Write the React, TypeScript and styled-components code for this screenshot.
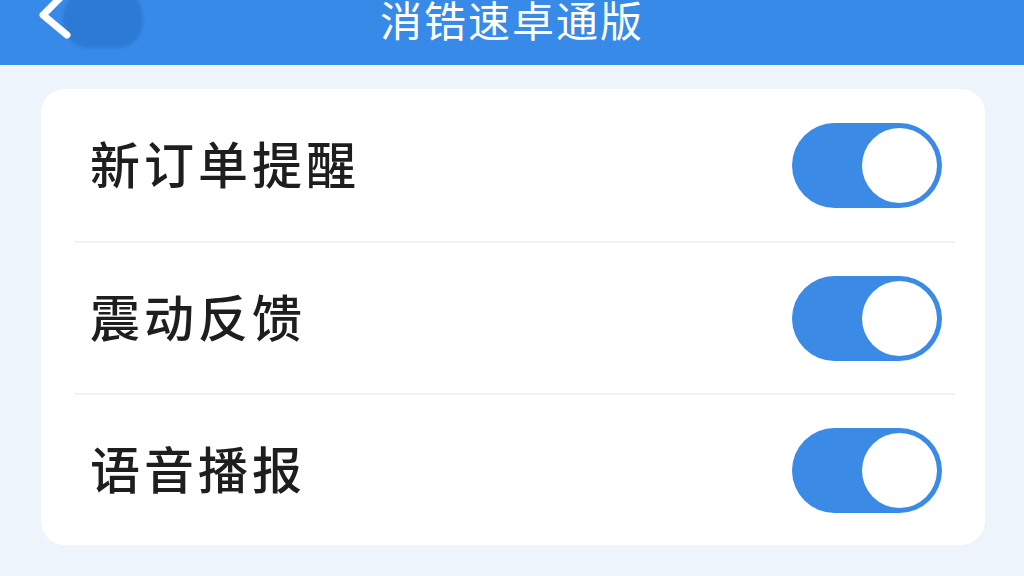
import React, { useState } from "react";
import styled, { createGlobalStyle } from "styled-components";

const GlobalStyle = createGlobalStyle`
    html, body {
        margin: 0;
        padding: 0;
        background: #eef4fc;
    }
    body {
        width: 1024px;
        height: 576px;
        overflow: hidden;
        font-family: "Noto Sans CJK SC", "Noto Sans", sans-serif;
    }
`;

type Setting = { id: string; label: string; on: boolean };

const initial: Setting[] = [
    { id: "order", label: "新订单提醒", on: true },
    { id: "vibrate", label: "震动反馈", on: true },
    { id: "voice", label: "语音播报", on: true },
];

export default function App() {
    const [items, setItems] = useState(initial);
    const toggle = (id: string) =>
        setItems((list) => list.map((it) => (it.id === id ? { ...it, on: !it.on } : it)));

    return (
        <Style_page>
            <GlobalStyle />
            <Style_header>
                <Style_back aria-label="返回">
                    <Style_blob />
                    <Style_chevron width="40" height="52" viewBox="0 0 40 52">
                        <polyline
                            points="29,4 9,24 33,44"
                            fill="none"
                            stroke="#fff"
                            strokeWidth="7"
                            strokeLinecap="round"
                            strokeLinejoin="round"
                        />
                    </Style_chevron>
                </Style_back>
                <Style_title>消锆速卓通版</Style_title>
                <Style_spacer />
            </Style_header>

            <Style_body>
                <Style_card>
                    {items.map((it) => (
                        <Style_row key={it.id}>
                            <Style_label>{it.label}</Style_label>
                            <Style_switch $on={it.on} onClick={() => toggle(it.id)}>
                                <Style_knob />
                            </Style_switch>
                        </Style_row>
                    ))}
                </Style_card>
            </Style_body>
        </Style_page>
    );
}

const Style_page = styled.div`
    width: 1024px;
    height: 576px;
    display: flex;
    flex-direction: column;
    background: #eef4fc;
`;

const Style_header = styled.header`
    height: 65px;
    flex-shrink: 0;
    background: #378ae8;
    display: flex;
    align-items: flex-start;
    padding: 0 34px;
    box-sizing: border-box;
    overflow: hidden;
`;

const Style_back = styled.div`
    position: relative;
    width: 110px;
    height: 57px;
    margin-top: -9px;
`;

const Style_blob = styled.div`
    position: absolute;
    left: 29px;
    top: 0;
    width: 80px;
    height: 57px;
    border-radius: 26px;
    background: #2c7ad4;
    filter: blur(1.5px);
`;

const Style_chevron = styled.svg`
    position: relative;
    display: block;
`;

const Style_title = styled.h1`
    flex: 1;
    margin: -4px 0 0;
    text-align: center;
    color: #fff;
    font-size: 42px;
    line-height: 46px;
    font-weight: 400;
    letter-spacing: 2px;
`;

const Style_spacer = styled.div`
    width: 110px;
`;

const Style_body = styled.main`
    padding: 24px 39px 0 41px;
`;

const Style_card = styled.section`
    background: #fff;
    border-radius: 24px;
    padding: 0 30px 0 34px;
    display: flex;
    flex-direction: column;
`;

const Style_row = styled.div`
    height: 152px;
    display: flex;
    align-items: center;
    justify-content: space-between;
    padding: 0 13px 0 15px;
    box-sizing: border-box;
    & + & {
        border-top: 2px solid #eff1f4;
    }
`;

const Style_label = styled.span`
    font-size: 50px;
    line-height: 56px;
    margin-top: -6px;
    color: #1e1e1e;
    font-weight: 500;
    letter-spacing: 4px;
`;

const Style_switch = styled.button<{ $on: boolean }>`
    width: 150px;
    height: 85px;
    border: none;
    border-radius: 43px;
    background: ${({ $on }) => ($on ? "#3a8ae6" : "#d8dde4")};
    padding: 5px;
    display: flex;
    justify-content: ${({ $on }) => ($on ? "flex-end" : "flex-start")};
    align-items: center;
    cursor: pointer;
    box-sizing: border-box;
`;

const Style_knob = styled.span`
    width: 75px;
    height: 75px;
    border-radius: 50%;
    background: #fff;
`;
